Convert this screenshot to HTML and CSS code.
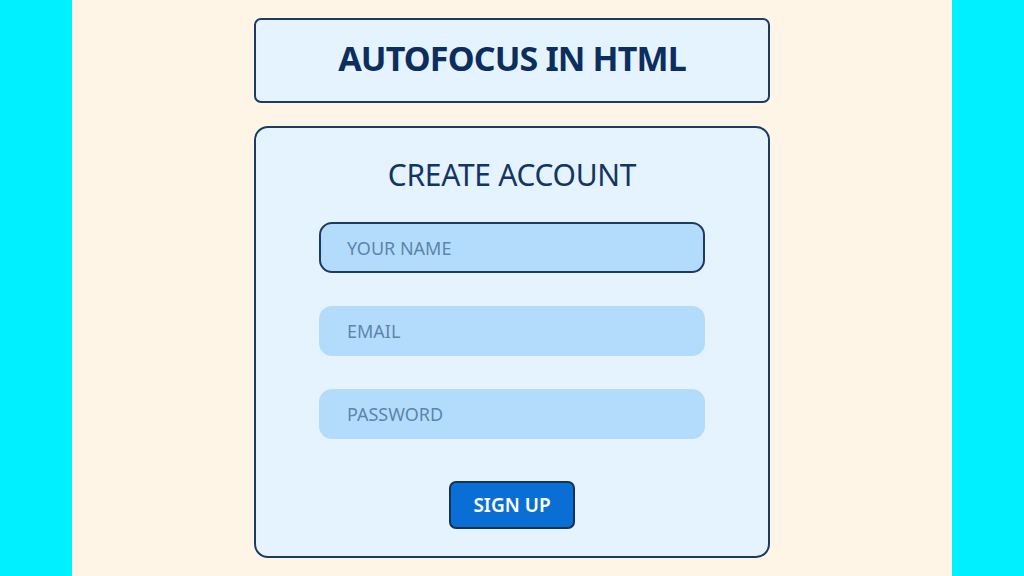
FILE: index.html
```html
<!DOCTYPE html>
<html>
<head>
<meta charset="utf-8">
<link rel="stylesheet" href="styles.css">
</head>
<body>
<div class="page">
  <div class="stage">
    <div class="title-box"><h1 class="title">AUTOFOCUS IN HTML</h1></div>
    <form class="card">
      <h2 class="card-title">CREATE ACCOUNT</h2>
      <div class="fields">
        <div class="field focused">YOUR NAME</div>
        <div class="field">EMAIL</div>
        <div class="field">PASSWORD</div>
      </div>
      <div class="btn">SIGN UP</div>
    </form>
  </div>
</div>
</body>
</html>
```
FILE: styles.css
```css
html, body { margin: 0; padding: 0; }
body {
  width: 1024px; height: 576px; overflow: hidden;
  background: #00f0ff;
  font-family: "Noto Sans", "Open Sans", sans-serif;
}
.page {
  display: flex; justify-content: center;
  height: 576px;
  padding-left: 72px; padding-right: 72px;
  box-sizing: border-box;
}
.stage {
  width: 880px; height: 576px;
  background: #fff5e6;
  display: flex; flex-direction: column; align-items: center;
  padding-top: 18px; box-sizing: border-box;
}
.title-box {
  width: 516px; height: 85px; box-sizing: border-box;
  border: 2px solid #1d3a62; border-radius: 7px;
  background: #e5f3ff;
  display: flex; align-items: center; justify-content: center;
  padding-bottom: 6px;
}
.title {
  margin: 0; font-size: 34px; font-weight: 700; color: #0c2e5e;
  letter-spacing: -0.85px;
}
.card {
  margin-top: 23px;
  width: 516px; height: 432px; box-sizing: border-box;
  border: 2px solid #1d3a62; border-radius: 14px;
  background: #e5f3ff;
  display: flex; flex-direction: column; align-items: center;
  padding-top: 26px;
}
.card-title {
  margin: 0; font-size: 30px; font-weight: 400; color: #133563;
  line-height: 42px; letter-spacing: -0.3px;
}
.fields {
  margin-top: 26px;
  display: flex; flex-direction: column; gap: 33px;
}
.field {
  width: 386px; height: 50px; box-sizing: border-box;
  border-radius: 13px; background: #b3dcfc;
  color: #5d84ab; font-size: 18px;
  display: flex; align-items: center; padding-left: 26px;
  border: 2px solid transparent;
}
.field.focused { border-color: #1d3a62; height: 51px; }
.btn {
  margin-top: 42px;
  width: 126px; height: 48px; box-sizing: border-box;
  border: 2px solid #13325a; border-radius: 7px;
  background: #0a6fd5; color: #ffffff;
  font-size: 19px; font-weight: 600;
  display: flex; align-items: center; justify-content: center;
}
```
